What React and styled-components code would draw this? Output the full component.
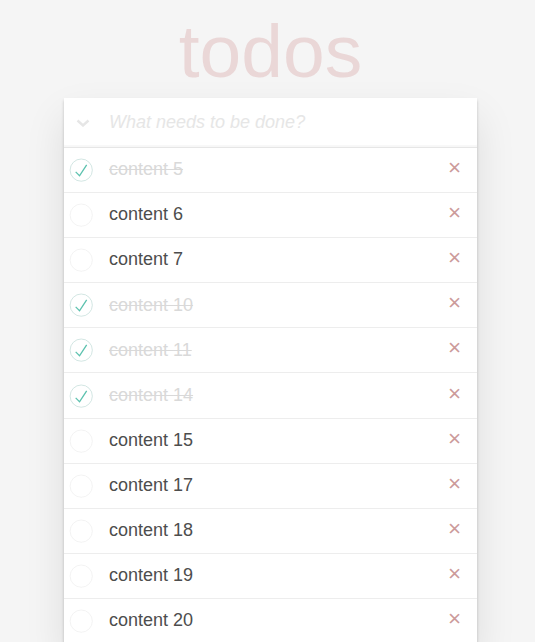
import React from "react";
import styled, { createGlobalStyle } from "styled-components";

const GlobalStyle = createGlobalStyle`
  html, body {
    margin: 0;
    padding: 0;
    height: 100%;
    overflow: hidden;
  }

  body {
    background: #f5f5f5;
    font-family: "Liberation Sans", Arial, sans-serif;
    color: #4d4d4d;
    -webkit-font-smoothing: antialiased;
  }
`;

const Container = styled.section`
  width: 413px;
  margin-left: 64px;
  padding-top: 14px;
`;

const Title = styled.h1`
  margin: 0 0 9px;
  font-size: 75px;
  line-height: 75px;
  font-weight: 100;
  text-align: center;
  color: rgba(175, 47, 47, 0.15);
`;

const Panel = styled.div`
  background: #fff;
  box-shadow: 0 1.5px 3px rgba(0, 0, 0, 0.2), 0 19px 38px rgba(0, 0, 0, 0.1);
`;

const Header = styled.header`
  display: flex;
  align-items: center;
  height: 49px;
  box-shadow: inset 0 -2px 1px rgba(0, 0, 0, 0.03);
`;

const ToggleAll = styled.div`
  width: 45px;
  display: flex;
  align-items: center;
  padding-left: 12px;
  box-sizing: border-box;
`;

const NewTodo = styled.input`
  flex: 1;
  border: none;
  outline: none;
  background: transparent;
  padding: 0;
  font-family: inherit;
  font-size: 18px;
  color: #4d4d4d;

  &::placeholder {
    font-style: italic;
    font-weight: 300;
    color: #e6e6e6;
  }
`;

const List = styled.ul`
  margin: 0;
  padding: 0;
  list-style: none;
  border-top: 1px solid #e6e6e6;
`;

const Item = styled.li`
  display: flex;
  align-items: center;
  height: 44.1px;
  border-bottom: 1px solid #ededed;
`;

const Check = styled.div`
  width: 45px;
  height: 30px;
  display: flex;
  align-items: center;
`;

const Label = styled.span`
  flex: 1;
  font-size: 18px;
  line-height: 1.2;
  color: ${(p) => (p.$done ? "#d9d9d9" : "#4d4d4d")};
  text-decoration: ${(p) => (p.$done ? "line-through" : "none")};
`;

const Destroy = styled.button`
  width: 30px;
  height: 30px;
  margin: 0 7.5px 4px 0;
  padding: 0;
  border: none;
  background: none;
  font-family: inherit;
  font-size: 22.5px;
  line-height: 30px;
  color: #cc9a9a;
  text-align: center;
`;

const todos = [
  { id: 5, done: true },
  { id: 6, done: false },
  { id: 7, done: false },
  { id: 10, done: true },
  { id: 11, done: true },
  { id: 14, done: true },
  { id: 15, done: false },
  { id: 17, done: false },
  { id: 18, done: false },
  { id: 19, done: false },
  { id: 20, done: false },
];

const Circle = ({ done }) => (
  <svg width="30" height="30" viewBox="-10 -18 100 135">
    <circle
      cx="50"
      cy="50"
      r="50"
      fill="none"
      stroke={done ? "#bddad5" : "#ededed"}
      strokeWidth="3"
    />
    {done && (
      <path fill="#5dc2af" d="M72 25L42 71 27 56l-4 4 20 20 34-52z" />
    )}
  </svg>
);

const App = () => (
  <>
    <GlobalStyle />
    <Container>
      <Title>todos</Title>
      <Panel>
        <Header>
          <ToggleAll>
            <svg width="14" height="8" viewBox="0 0 14 8">
              <polyline
                points="1.5,1.5 7,6.5 12.5,1.5"
                fill="none"
                stroke="#e6e6e6"
                strokeWidth="2.4"
              />
            </svg>
          </ToggleAll>
          <NewTodo placeholder="What needs to be done?" />
        </Header>
        <List>
          {todos.map((t) => (
            <Item key={t.id}>
              <Check>
                <Circle done={t.done} />
              </Check>
              <Label $done={t.done}>content {t.id}</Label>
              <Destroy>×</Destroy>
            </Item>
          ))}
        </List>
      </Panel>
    </Container>
  </>
);

export default App;
